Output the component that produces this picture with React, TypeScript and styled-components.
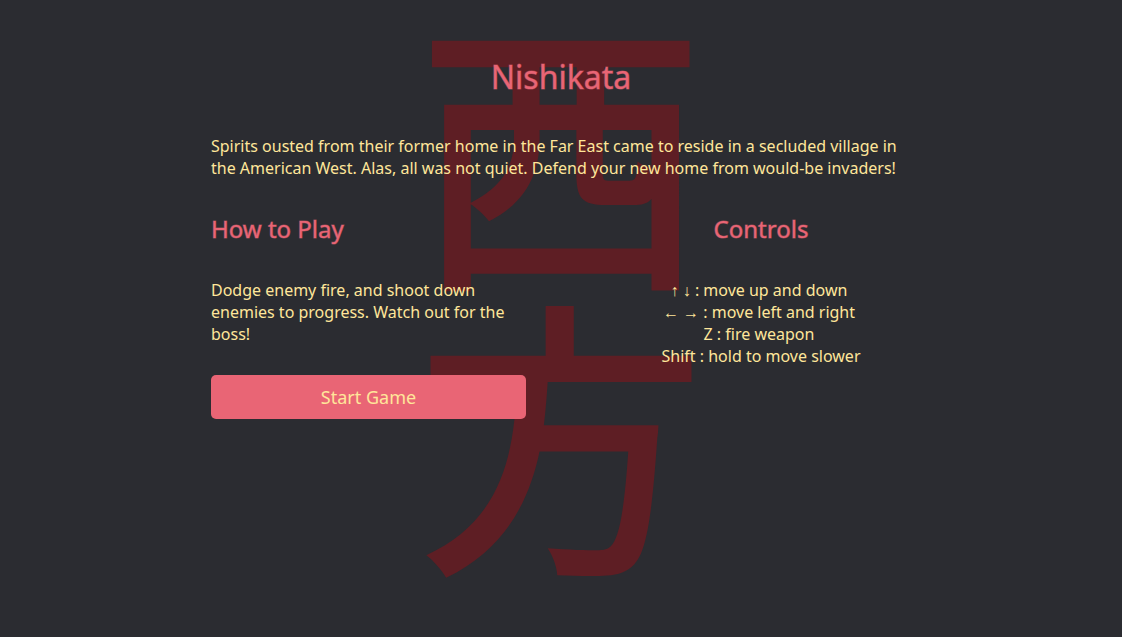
import React from "react";
import styled, { createGlobalStyle } from "styled-components";

const GlobalStyle = createGlobalStyle`
  body {
    margin: 0;
    background: #2b2c31;
    color: #ffe69a;
    font-family: "Noto Sans", "Liberation Sans", sans-serif;
    font-size: 16px;
    line-height: 22px;
  }
`;

const Page = styled.main`
  position: relative;
  box-sizing: border-box;
  min-height: 100vh;
  padding: 55px 16px 32px;
  overflow: hidden;
`;

const Emblem = styled.div`
  position: absolute;
  top: 0;
  left: 0;
  right: 0;
  display: flex;
  flex-direction: column;
  align-items: center;
  color: #5e1e24;
  font-family: "Noto Sans CJK JP", sans-serif;
  font-size: 290px;
  font-weight: 500;
  line-height: 284px;
  user-select: none;
`;

const Content = styled.div`
  position: relative;
  max-width: 700px;
  margin: 0 auto;
`;

const Title = styled.h1`
  margin: 0 0 36px;
  color: #e96575;
  font-size: 32px;
  font-weight: 400;
  line-height: 44px;
  text-align: center;
  -webkit-text-stroke: 1px rgba(233, 101, 117, 0.5);
`;

const Text = styled.p`
  margin: 0;
`;

const Columns = styled.div`
  display: flex;
  justify-content: space-between;
  margin-top: 33px;
`;

const Column = styled.section<{ $width: string; $align?: string }>`
  width: ${(p) => p.$width};
  text-align: ${(p) => p.$align ?? "left"};
`;

const Heading = styled.h2`
  margin: 0 0 34px;
  color: #e96575;
  font-size: 24px;
  font-weight: 400;
  line-height: 33px;
  -webkit-text-stroke: 1px rgba(233, 101, 117, 0.5);
`;

const StartButton = styled.button`
  width: 100%;
  height: 44px;
  margin-top: 30px;
  padding: 0;
  border: 0;
  border-radius: 5px;
  background: #e96575;
  color: #ffe69a;
  font: inherit;
  font-size: 18px;
  cursor: pointer;
`;

const ControlList = styled.ul`
  margin: 0;
  padding: 0;
  list-style: none;
`;

const ControlItem = styled.li`
  &:not(:last-child) {
    padding-right: 4px;
  }
`;

const controls = [
  "↑ ↓ : move up and down",
  "← → : move left and right",
  "Z : fire weapon",
  "Shift : hold to move slower",
];

export default function App() {
  return (
    <Page>
      <GlobalStyle />
      <Emblem lang="ja" aria-hidden="true">
        <span>西</span>
        <span>方</span>
      </Emblem>
      <Content>
        <Title>Nishikata</Title>
        <Text>
          Spirits ousted from their former home in the Far East came to reside in a secluded
          village in the American West. Alas, all was not quiet. Defend your new home from
          would-be invaders!
        </Text>
        <Columns>
          <Column $width="45%">
            <Heading>How to Play</Heading>
            <Text>
              Dodge enemy fire, and shoot down enemies to progress. Watch out for the boss!
            </Text>
            <StartButton type="button">Start Game</StartButton>
          </Column>
          <Column $width="300px" $align="center">
            <Heading>Controls</Heading>
            <ControlList>
              {controls.map((line) => (
                <ControlItem key={line}>{line}</ControlItem>
              ))}
            </ControlList>
          </Column>
        </Columns>
      </Content>
    </Page>
  );
}
